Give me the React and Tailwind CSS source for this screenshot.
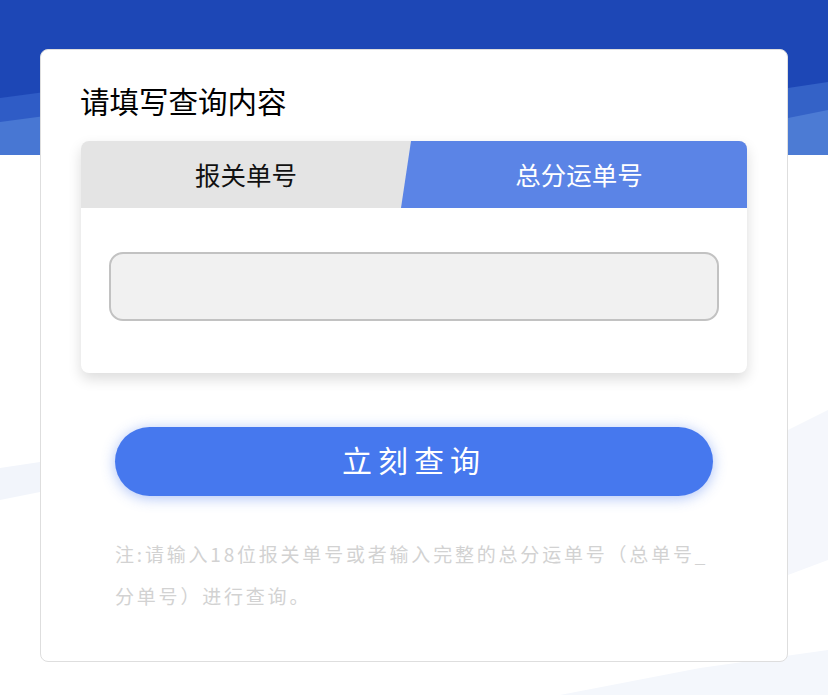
import { useState } from "react";

const FONT = { fontFamily: '"Noto Sans CJK SC", "Noto Sans", sans-serif' };

const Header = () => (
    <div className="relative h-[155px] bg-[#1d47b6] overflow-hidden">
        <svg className="absolute inset-0 w-full h-full" viewBox="0 0 828 155" preserveAspectRatio="none">
            <polygon points="0,98 60,90 60,155 0,155" fill="#2f5cc6" />
            <polygon points="0,122 60,114 60,155 0,155" fill="#4877d3" />
            <polygon points="788,88 828,82 828,155 788,155" fill="#3462c7" />
            <polygon points="788,118 828,110 828,155 788,155" fill="#4c7bd4" />
        </svg>
    </div>
);

const Decor = () => (
    <svg className="absolute left-0 top-[155px] w-[828px] h-[540px] pointer-events-none" viewBox="0 155 828 540">
        <polygon points="0,468 40,462 40,492 0,500" fill="#f2f5fb" />
        <polygon points="788,430 828,410 828,560 788,575" fill="#f5f7fc" />
        <polygon points="560,695 700,668 828,650 828,695" fill="#f4f7fc" />
    </svg>
);

export default function App() {
    const [tab, setTab] = useState(1);
    const [value, setValue] = useState("");

    return (
        <div className="relative w-[828px] h-[695px] bg-white overflow-hidden" style={FONT}>
            <Header />
            <Decor />
            <div className="relative mx-[40px] -mt-[106px] h-[613px] bg-white rounded-[8px] border border-[#dedede] px-[40px] pt-[28px]">
                <h2 className="-ml-[1px] text-[29.5px] leading-[44px] text-black">请填写查询内容</h2>

                <div className="mt-[19px] rounded-[8px] bg-white shadow-[0_6px_14px_rgba(0,0,0,0.14)] overflow-hidden">
                    <div className="relative flex h-[67px] bg-[#e4e4e4]">
                        <div
                            className="absolute top-0 right-0 h-full w-[346px] bg-[#5b84e6] [clip-path:polygon(10px_0,100%_0,100%_100%,0_100%)]"
                            style={{ opacity: tab === 1 ? 1 : 0 }}
                        />
                        <button
                            onClick={() => setTab(0)}
                            className="relative w-[330px] text-[25.5px] text-[#111] cursor-pointer"
                        >
                            报关单号
                        </button>
                        <button
                            onClick={() => setTab(1)}
                            className="relative flex-1 text-[25.5px] text-white cursor-pointer"
                        >
                            总分运单号
                        </button>
                    </div>
                    <div className="px-[28px] pt-[44px] pb-[52px]">
                        <input
                            value={value}
                            onChange={(e) => setValue(e.target.value)}
                            className="block w-full h-[69px] rounded-[14px] bg-[#f1f1f1] border-2 border-[#c2c2c2] px-4 text-[22px] outline-none"
                        />
                    </div>
                </div>

                <div className="mt-[54px] px-[34px]">
                    <button className="w-full h-[69px] pb-[4px] rounded-full bg-[#4678ee] text-white text-[30px] tracking-[6px] shadow-[0_2px_14px_rgba(70,120,238,0.45)] cursor-pointer">
                        立刻查询
                    </button>
                </div>

                <p className="mt-[37px] ml-[34px] w-[610px] text-[19px] leading-[42px] tracking-[2.8px] text-[#d2d2d2]">
                    注:请输入18位报关单号或者输入完整的总分运单号（总单号_分单号）进行查询。
                </p>
            </div>
        </div>
    );
}
